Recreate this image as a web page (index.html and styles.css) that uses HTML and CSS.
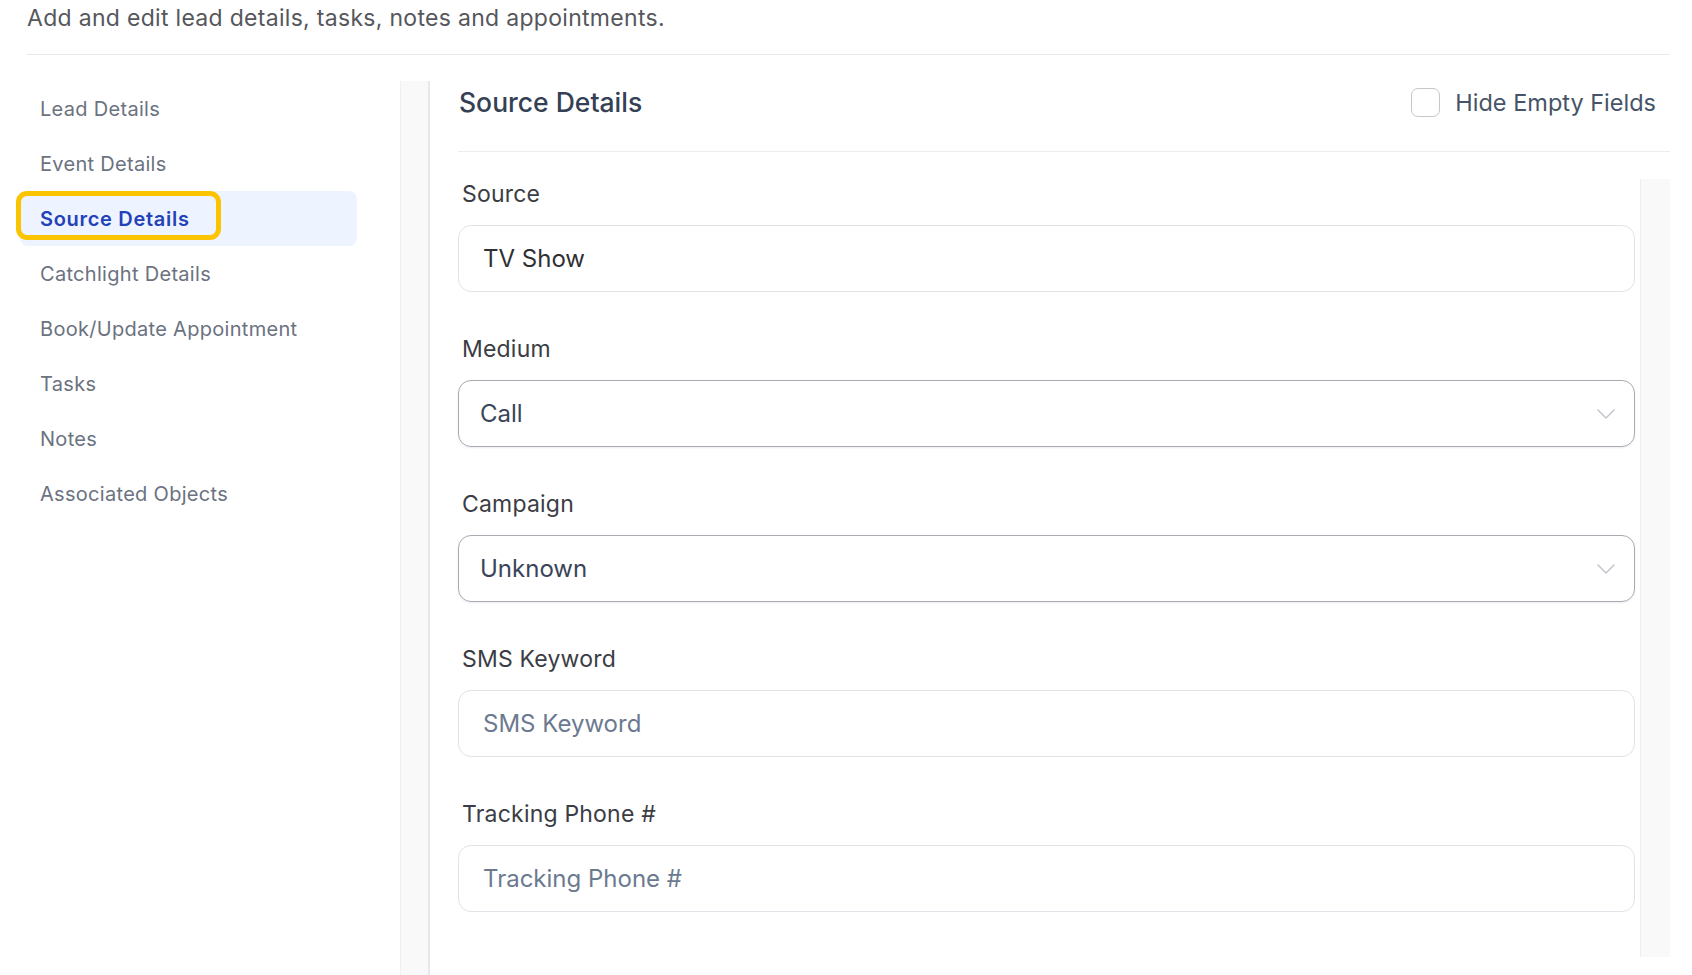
FILE: index.html
```html
<!DOCTYPE html>
<html lang="en">
<head>
    <meta charset="UTF-8">
    <meta name="viewport" content="width=device-width, initial-scale=1.0">
    <title>Lead Details - Source Details</title>
    <link rel="stylesheet" href="styles.css">
</head>
<body>
    <div class="page">
        <div class="page-head">
            <p class="subtitle">Add and edit lead details, tasks, notes and appointments.</p>
        </div>

        <div class="layout">
            <nav class="side-nav">
                <a href="#" class="nav-item">Lead Details</a>
                <a href="#" class="nav-item">Event Details</a>
                <a href="#" class="nav-item active">
                    <span class="callout"></span>
                    Source Details
                </a>
                <a href="#" class="nav-item">Catchlight Details</a>
                <a href="#" class="nav-item">Book/Update Appointment</a>
                <a href="#" class="nav-item">Tasks</a>
                <a href="#" class="nav-item">Notes</a>
                <a href="#" class="nav-item">Associated Objects</a>
            </nav>

            <div class="divider"></div>

            <main class="panel">
                <div class="panel-header">
                    <h2>Source Details</h2>
                    <label class="hide-empty">
                        <span class="checkbox"></span>
                        Hide Empty Fields
                    </label>
                </div>

                <div class="panel-body">
                    <div class="fields">
                        <div class="form-group">
                            <label for="source">Source</label>
                            <div class="field">TV Show</div>
                        </div>

                        <div class="form-group">
                            <label for="medium">Medium</label>
                            <div class="field select">
                                Call
                                <svg class="chevron" viewBox="0 0 18 10" width="18" height="10">
                                    <path d="M1 1l8 8 8-8" fill="none" stroke="#bfc2c8" stroke-width="1.4" stroke-linecap="round" stroke-linejoin="round"/>
                                </svg>
                            </div>
                        </div>

                        <div class="form-group">
                            <label for="campaign">Campaign</label>
                            <div class="field select">
                                Unknown
                                <svg class="chevron" viewBox="0 0 18 10" width="18" height="10">
                                    <path d="M1 1l8 8 8-8" fill="none" stroke="#bfc2c8" stroke-width="1.4" stroke-linecap="round" stroke-linejoin="round"/>
                                </svg>
                            </div>
                        </div>

                        <div class="form-group">
                            <label for="sms">SMS Keyword</label>
                            <div class="field placeholder">SMS Keyword</div>
                        </div>

                        <div class="form-group">
                            <label for="phone">Tracking Phone #</label>
                            <div class="field placeholder">Tracking Phone #</div>
                        </div>
                    </div>
                    <div class="scroll-track"></div>
                </div>
            </main>
        </div>
    </div>
</body>
</html>
```

FILE: styles.css
```css
* {
    margin: 0;
    padding: 0;
    box-sizing: border-box;
}

body {
    font-family: 'Inter', 'Noto Sans', sans-serif;
    background: #fff;
    overflow: hidden;
}

.page {
    padding: 0 22px 0 20px;
}

.page-head {
    margin-left: 7px;
    height: 55px;
    border-bottom: 1px solid #e9eaee;
}

.subtitle {
    line-height: 37px;
    font-size: 23px;
    letter-spacing: 0.3px;
    color: #56575c;
}

.layout {
    display: flex;
    margin-top: 26px;
    height: 894px;
}

/* left navigation */
.side-nav {
    width: 337px;
    margin-right: 43px;
    display: flex;
    flex-direction: column;
}

.nav-item {
    position: relative;
    display: flex;
    align-items: center;
    height: 55px;
    padding-left: 20px;
    border-radius: 8px;
    font-size: 20px;
    letter-spacing: 0.3px;
    color: #6b7280;
    text-decoration: none;
}

.nav-item.active {
    background: #eef4ff;
    color: #2341b8;
    font-weight: 600;
    letter-spacing: 0.7px;
}

.callout {
    position: absolute;
    left: -4px;
    top: 0;
    width: 205px;
    height: 49px;
    border: 5px solid #fbc400;
    border-radius: 11px;
}

.divider {
    width: 30px;
    background: #f9f9fa;
    border-left: 1px solid #efeff2;
    border-right: 2px solid #e7e8ec;
}

/* right panel */
.panel {
    flex: 1;
    padding-left: 28px;
    display: flex;
    flex-direction: column;
}

.panel-header {
    display: flex;
    justify-content: space-between;
    align-items: center;
    height: 71px;
    padding: 0 14px 28px 1px;
    border-bottom: 1px solid #eaecf0;
}

.panel-header h2 {
    font-size: 26.5px;
    font-weight: 500;
    color: #344054;
}

.hide-empty {
    display: flex;
    align-items: center;
    gap: 15px;
    font-size: 23.5px;
    color: #475467;
}

.checkbox {
    width: 29px;
    height: 29px;
    border: 1.5px solid #c5c7cc;
    border-radius: 7px;
    background: #fff;
}

.panel-body {
    flex: 1;
    display: flex;
    margin-top: 27px;
}

.fields {
    flex: 1;
    padding-right: 5px;
}

.scroll-track {
    width: 30px;
    height: 778px;
    background: #f9f9fa;
    border-left: 1px solid #efeff2;
}

.form-group {
    margin-bottom: 42px;
}

.form-group label {
    display: block;
    padding-left: 4px;
    margin-bottom: 16px;
    line-height: 30px;
    font-size: 23px;
    letter-spacing: 0.2px;
    color: #3b3d44;
}

.field {
    position: relative;
    display: flex;
    align-items: center;
    height: 67px;
    padding-left: 24px;
    border: 1.5px solid #e1e3e8;
    border-radius: 13px;
    font-size: 24px;
    color: #2f3033;
}

.field.select {
    padding-left: 21px;
    border-color: #a9abb2;
    box-shadow: 0 1px 2px rgba(16, 24, 40, 0.08);
    color: #39455a;
}

.field.placeholder {
    color: #6c7a90;
}

.chevron {
    position: absolute;
    right: 19px;
    top: 50%;
    margin-top: -5px;
}
```
